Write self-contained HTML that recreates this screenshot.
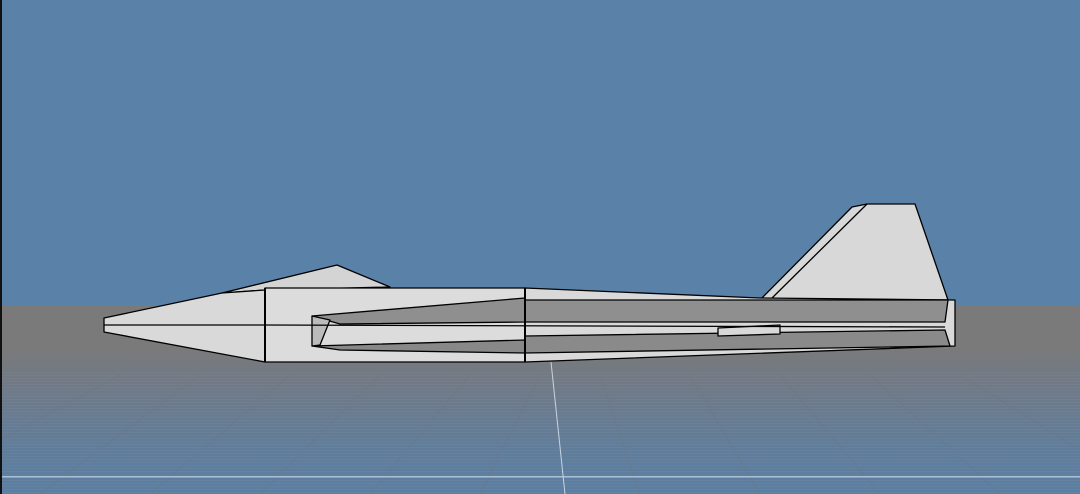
<!DOCTYPE html>
<html><head><meta charset="utf-8"><style>
html,body{margin:0;padding:0;width:1080px;height:494px;overflow:hidden;background:#5a81a8}
svg{display:block}
</style></head><body>
<svg width="1080" height="494" viewBox="0 0 1080 494" xmlns="http://www.w3.org/2000/svg">
<defs>
<linearGradient id="g" x1="0" y1="0" x2="0" y2="1">
<stop offset="0" stop-color="#7a7a7a"/>
<stop offset="0.22" stop-color="#7a7a7a"/>
<stop offset="0.45" stop-color="#6f7a88"/>
<stop offset="0.75" stop-color="#5f7d9c"/>
<stop offset="1" stop-color="#5a7fa5"/>
</linearGradient>
<pattern id="h" width="4" height="3" patternUnits="userSpaceOnUse"><rect width="4" height="1" fill="#7a8593" opacity="0.35"/></pattern>
</defs>
<rect x="0" y="0" width="1080" height="305" fill="#5a81a8"/>
<rect x="0" y="305" width="1080" height="189" fill="url(#g)"/>
<rect x="0" y="370" width="1080" height="124" fill="url(#h)"/>
<g stroke="#6e7680" stroke-width="1" opacity="0.5" fill="none">
<line x1="0" y1="440" x2="120" y2="375"/><line x1="40" y1="494" x2="200" y2="375"/>
<line x1="150" y1="494" x2="290" y2="375"/><line x1="260" y1="494" x2="380" y2="375"/>
<line x1="370" y1="494" x2="470" y2="375"/><line x1="480" y1="494" x2="540" y2="375"/>
<line x1="640" y1="494" x2="600" y2="375"/><line x1="760" y1="494" x2="690" y2="375"/>
<line x1="880" y1="494" x2="780" y2="375"/><line x1="1000" y1="494" x2="870" y2="375"/>
<line x1="1080" y1="450" x2="960" y2="375"/>
</g>
<rect x="0" y="476" width="1080" height="1.5" fill="#a9c0d8"/>
<line x1="551" y1="362" x2="565" y2="494" stroke="#c8d4e0" stroke-width="1"/>
<rect x="0" y="0" width="2" height="494" fill="#111"/>
<g stroke="#000" stroke-width="1.3" stroke-linejoin="round">
<!-- tail -->
<polygon points="760,300 852,207 867,204 915,204 948,300" fill="#d8d8d8"/>
<line x1="770" y1="300" x2="867" y2="204"/>
<!-- canopy -->
<polygon points="222,293 337,265 390,287 265,290" fill="#d4d4d4"/>
<!-- rear body -->
<polygon points="525,288 760,298 955,300 955,346 525,362" fill="#d9d9d9"/>
<polygon points="525,300 948,300 945,322 525,322" fill="#8f8f8f"/>
<polygon points="525,336 945,330 950,346 525,353" fill="#8a8a8a"/>
<polygon points="718,328 780,325 780,334 718,336" fill="#d8d8d8"/>
<!-- nose -->
<polygon points="104,318 222,293 265,290 265,362 104,332" fill="#d9d9d9"/>
<line x1="104" y1="325" x2="265" y2="325"/>
<!-- front fuselage -->
<rect x="265" y="288" width="260" height="74" fill="#dcdcdc"/>
<polygon points="312,316 525,298 525,322 340,324" fill="#8f8f8f"/>
<polygon points="312,346 525,340 525,353 340,350" fill="#888"/>
<polygon points="312,316 330,320 320,345 312,346" fill="#bbb"/>
<line x1="265" y1="325" x2="945" y2="327"/>
<line x1="525" y1="288" x2="525" y2="362" stroke-width="2"/>
<line x1="265" y1="288" x2="265" y2="362" stroke-width="2"/>
</g>
</svg>
</body></html>
